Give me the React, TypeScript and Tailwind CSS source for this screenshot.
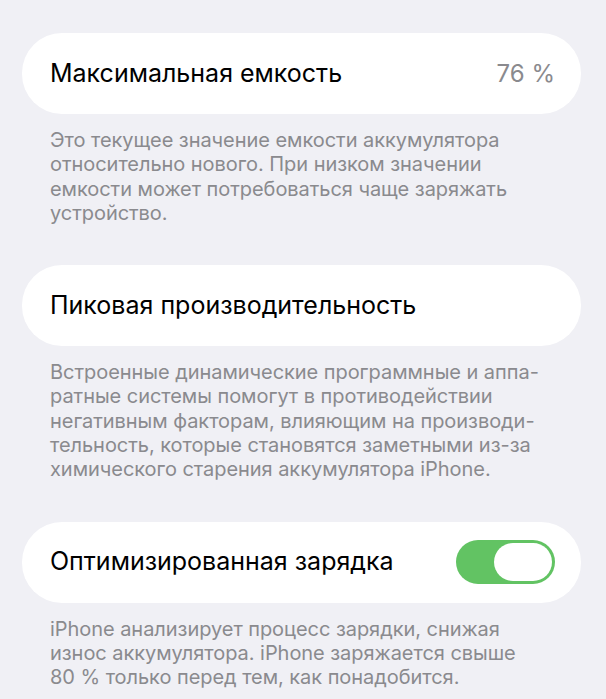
const Card = ({ children }: { children: React.ReactNode }) => (
  <div className="h-[81px] rounded-[40px] bg-white pl-[28px] pr-[26px] flex items-center justify-between">
    {children}
  </div>
)

const Note = ({ children }: { children: React.ReactNode }) => (
  <p className="px-[28px] mt-[14px] text-[20px] leading-[24.3px] tracking-[-0.05px] text-[#8a8a8e]">{children}</p>
)

const Toggle = () => (
  <div className="w-[99px] h-[44px] rounded-full bg-[#62c363] flex items-center justify-end pr-[3px]">
    <div className="w-[58px] h-[38px] rounded-full bg-white"></div>
  </div>
)

export default function App() {
  return (
    <div
      className="w-[606px] h-[699px] overflow-hidden bg-[#f0f0f5] pl-[22px] pr-[25px] pt-[33px]"
      style={{ fontFamily: "Inter, Roboto, sans-serif" }}
    >
      <Card>
        <span className="text-[25px] text-black">Максимальная емкость</span>
        <span className="text-[24px] text-[#8a8a8e]">76 %</span>
      </Card>
      <Note>
        Это текущее значение емкости аккумулятора
        <br />
        относительно нового. При низком значении
        <br />
        емкости может потребоваться чаще заряжать
        <br />
        устройство.
      </Note>

      <div className="mt-[40px]">
        <Card>
          <span className="text-[25px] text-black">Пиковая производительность</span>
        </Card>
      </div>
      <Note>
        Встроенные динамические программные и аппа-
        <br />
        ратные системы помогут в противодействии
        <br />
        негативным факторам, влияющим на производи-
        <br />
        тельность, которые становятся заметными из-за
        <br />
        химического старения аккумулятора iPhone.
      </Note>

      <div className="mt-[40px]">
        <Card>
          <span className="text-[25px] text-black">Оптимизированная зарядка</span>
          <Toggle />
        </Card>
      </div>
      <Note>
        iPhone анализирует процесс зарядки, снижая
        <br />
        износ аккумулятора. iPhone заряжается свыше
        <br />
        80 % только перед тем, как понадобится.
      </Note>
    </div>
  )
}
